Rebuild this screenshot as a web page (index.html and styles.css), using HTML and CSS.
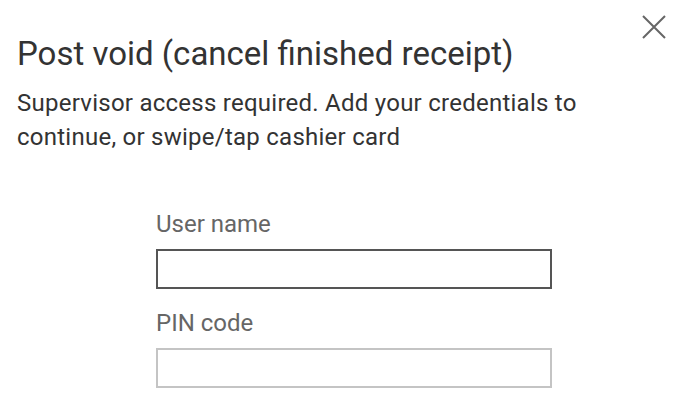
FILE: index.html
```html
<!DOCTYPE html>
<html lang="en">
<head>
<meta charset="utf-8">
<title>Post void</title>
<link rel="stylesheet" href="styles.css">
</head>
<body>
<div class="dialog">
  <button class="close" aria-label="Close">
    <svg width="24" height="24" viewBox="0 0 24 24"><path d="M1 1 L23 23 M23 1 L1 23" stroke="#666" stroke-width="2" fill="none"/></svg>
  </button>
  <h1 class="title">Post void (cancel finished receipt)</h1>
  <p class="subtitle">Supervisor access required. Add your credentials to continue, or swipe/tap cashier card</p>
  <form class="form">
    <label class="field">
      <span class="label">User name</span>
      <input class="input input-active" type="text">
    </label>
    <label class="field">
      <span class="label">PIN code</span>
      <input class="input" type="password">
    </label>
  </form>
</div>
</body>
</html>
```
FILE: styles.css
```css
html, body {
  margin: 0;
  padding: 0;
  background: #fff;
}
body {
  font-family: Roboto, "Open Sans", sans-serif;
  color: #333;
}
.dialog {
  position: relative;
  width: 682px;
  height: 411px;
  padding: 34px 17px 0 17px;
  box-sizing: border-box;
  overflow: hidden;
}
.close {
  position: absolute;
  top: 15px;
  right: 16px;
  width: 24px;
  height: 24px;
  padding: 0;
  border: 0;
  background: none;
  display: flex;
}
.title {
  margin: 0;
  font-size: 33px;
  line-height: 40px;
  font-weight: 400;
  color: #333;
}
.subtitle {
  margin: 12px 0 0 0;
  max-width: 610px;
  font-size: 24px;
  line-height: 34px;
  letter-spacing: 0.25px;
  color: #333;
}
.form {
  display: flex;
  flex-direction: column;
  align-items: center;
  gap: 20px;
  margin-top: 56px;
  padding-left: 26px;
}
.field {
  display: flex;
  flex-direction: column;
  width: 396px;
}
.label {
  font-size: 24px;
  line-height: 28px;
  color: #666;
  margin-bottom: 11px;
}
.input {
  box-sizing: border-box;
  width: 396px;
  height: 40px;
  margin: 0;
  border: 2px solid #c4c4c4;
  background: #fff;
  outline: none;
}
.input-active {
  border-color: #555;
}
```
